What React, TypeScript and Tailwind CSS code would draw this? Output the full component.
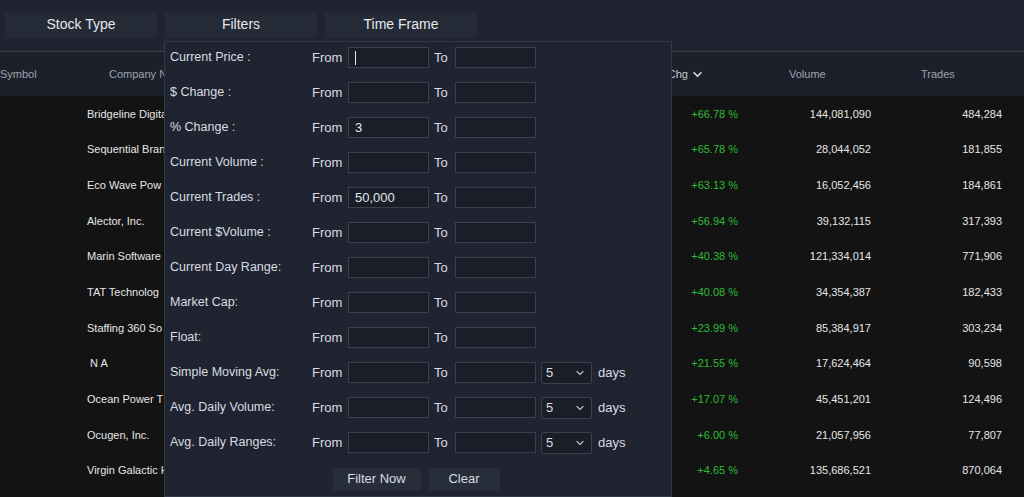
import React from "react";

const rows = [
  { name: "Bridgeline Digita", pct: "+66.78 %", vol: "144,081,090", trades: "484,284" },
  { name: "Sequential Bran", pct: "+65.78 %", vol: "28,044,052", trades: "181,855" },
  { name: "Eco Wave Pow", pct: "+63.13 %", vol: "16,052,456", trades: "184,861" },
  { name: "Alector, Inc.", pct: "+56.94 %", vol: "39,132,115", trades: "317,393" },
  { name: "Marin Software", pct: "+40.38 %", vol: "121,334,014", trades: "771,906" },
  { name: "TAT Technolog", pct: "+40.08 %", vol: "34,354,387", trades: "182,433" },
  { name: "Staffing 360 So", pct: "+23.99 %", vol: "85,384,917", trades: "303,234" },
  { name: "\u00a0N A", pct: "+21.55 %", vol: "17,624,464", trades: "90,598" },
  { name: "Ocean Power T", pct: "+17.07 %", vol: "45,451,201", trades: "124,496" },
  { name: "Ocugen, Inc.", pct: "+6.00 %", vol: "21,057,956", trades: "77,807" },
  { name: "Virgin Galactic H", pct: "+4.65 %", vol: "135,686,521", trades: "870,064" },
];

const filters: { label: string; from?: string; cursor?: boolean; days?: boolean }[] = [
  { label: "Current Price :", cursor: true },
  { label: "$ Change :" },
  { label: "% Change :", from: "3" },
  { label: "Current Volume :" },
  { label: "Current Trades :", from: "50,000" },
  { label: "Current $Volume :" },
  { label: "Current Day Range:" },
  { label: "Market Cap:" },
  { label: "Float:" },
  { label: "Simple Moving Avg:", days: true },
  { label: "Avg. Daily Volume:", days: true },
  { label: "Avg. Daily Ranges:", days: true },
];

function Chevron({ className = "" }: { className?: string }) {
  return (
    <svg viewBox="0 0 12 8" className={className} fill="none" stroke="currentColor" strokeWidth="1.6">
      <path d="M1.5 1.5 L6 6 L10.5 1.5" />
    </svg>
  );
}

function Field({ value, cursor }: { value?: string; cursor?: boolean }) {
  return (
    <div className="flex h-[21px] w-[81px] items-center border border-[#3a404d] bg-[#1a1e28] px-[6px] text-[13px] text-[#e4e6ea]">
      {cursor ? <span className="h-[14px] w-px bg-[#e4e6ea]" /> : value}
    </div>
  );
}

function FilterPanel() {
  return (
    <div className="absolute left-[164px] top-[41px] h-[456px] w-[508px] border border-[#333946] bg-[#1f2430] text-[#d9dce2]">
      <div className="-mt-[2px] flex flex-col">
        {filters.map((f) => (
          <div key={f.label} className="flex h-[35px] items-center text-[12.5px]">
            <div className="w-[147px] pl-[5px]">{f.label}</div>
            <div className="w-[36px] text-[13px]">From</div>
            <Field value={f.from} cursor={f.cursor} />
            <div className="w-[26px] pl-[5px] text-[13px]">To</div>
            <Field />
            {f.days && (
              <>
                <div className="ml-[5px] flex h-[22px] w-[51px] items-center justify-between rounded-[2px] border border-[#3a404d] bg-[#1a1e28] pl-[4px] pr-[6px] text-[13px]">
                  <span>5</span>
                  <Chevron className="h-[6px] w-[10px] text-[#c9ccd3]" />
                </div>
                <div className="pl-[6px] text-[13px]">days</div>
              </>
            )}
          </div>
        ))}
      </div>
      <div className="mt-[8px] flex justify-center gap-[8px] pr-[4px] text-[13px]">
        <div className="flex h-[22px] w-[88px] items-center justify-center bg-[#272d39]">Filter Now</div>
        <div className="flex h-[22px] w-[71px] items-center justify-center bg-[#272d39]">Clear</div>
      </div>
    </div>
  );
}

export default function App() {
  return (
    <div
      className="relative h-[497px] w-[1024px] overflow-hidden bg-[#131313]"
      style={{ fontFamily: '"Liberation Sans", Arial, sans-serif' }}
    >
      {/* top tabs */}
      <div className="flex h-[52px] items-center gap-[8px] border-b border-[#3a404b] bg-[#1f2430] pb-[2px] pl-[5px]">
        {["Stock Type", "Filters", "Time Frame"].map((t) => (
          <div
            key={t}
            className="flex h-[26px] w-[152px] items-center justify-center bg-[#242a36] text-[14px] text-[#e6e8ec]"
          >
            {t}
          </div>
        ))}
      </div>

      {/* table header */}
      <div className="flex h-[44px] items-center bg-[#1c202b] text-[11px] text-[#9da3ad]">
        <div className="w-[109px]">Symbol</div>
        <div className="w-[549px]">Company Name</div>
        <div className="flex w-[131px] items-center gap-[4px] text-[#c6cad1]">
          %Chg <Chevron className="h-[7px] w-[11px] text-[#e6e8ec]" />
        </div>
        <div className="w-[132px]">Volume</div>
        <div>Trades</div>
      </div>

      {/* table body */}
      <div className="flex flex-col text-[11px] text-[#e6e6e6]">
        {rows.map((r) => (
          <div key={r.name} className="flex h-[35.7px] items-center">
            <div className="w-[87px]" />
            <div className="w-[560px] whitespace-nowrap">{r.name}</div>
            <div className="w-[91px] text-right text-[#2dbb35]">{r.pct}</div>
            <div className="w-[133px] text-right">{r.vol}</div>
            <div className="w-[131px] text-right">{r.trades}</div>
          </div>
        ))}
      </div>

      <FilterPanel />
    </div>
  );
}
